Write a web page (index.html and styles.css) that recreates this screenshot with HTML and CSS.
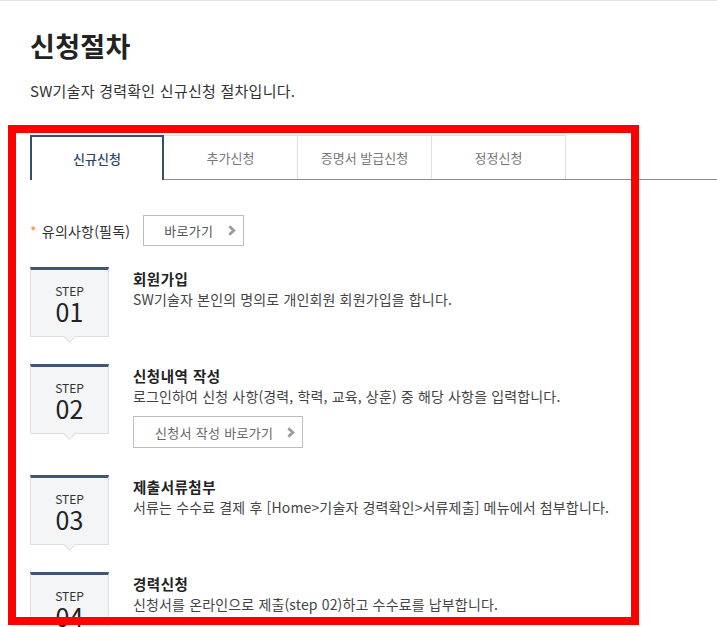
FILE: index.html
```html
<!DOCTYPE html>
<html lang="ko">
<head>
<meta charset="utf-8">
<title>신청절차</title>
<link rel="stylesheet" href="styles.css">
</head>
<body>
<div class="topline"></div>
<main class="page">
  <h1 class="title">신청절차</h1>
  <p class="sub">SW기술자 경력확인 신규신청 절차입니다.</p>

  <div class="tabs">
    <a class="tab active">신규신청</a>
    <a class="tab">추가신청</a>
    <a class="tab">증명서 발급신청</a>
    <a class="tab">정정신청</a>
  </div>

  <div class="notice">
    <span class="notice-label"><span class="star">*</span> 유의사항(필독)</span>
    <a class="btn btn-short">바로가기
      <svg class="chev" width="8" height="11" viewBox="0 0 8 11"><polyline points="1.3,1.3 5.8,5.5 1.3,9.7" fill="none" stroke="#9c9c9c" stroke-width="2.8"/></svg>
    </a>
  </div>

  <ol class="steps">
    <li class="step">
      <div class="step-box"><span class="step-label">STEP</span><span class="step-num">01</span></div>
      <div class="step-body">
        <h3 class="step-title">회원가입</h3>
        <p class="step-desc">SW기술자 본인의 명의로 개인회원 회원가입을 합니다.</p>
      </div>
    </li>
    <li class="step">
      <div class="step-box"><span class="step-label">STEP</span><span class="step-num">02</span></div>
      <div class="step-body">
        <h3 class="step-title">신청내역 작성</h3>
        <p class="step-desc">로그인하여 신청 사항(경력, 학력, 교육, 상훈) 중 해당 사항을 입력합니다.</p>
        <a class="btn btn-long">신청서 작성 바로가기
          <svg class="chev" width="8" height="11" viewBox="0 0 8 11"><polyline points="1.3,1.3 5.8,5.5 1.3,9.7" fill="none" stroke="#9c9c9c" stroke-width="2.8"/></svg>
        </a>
      </div>
    </li>
    <li class="step">
      <div class="step-box"><span class="step-label">STEP</span><span class="step-num">03</span></div>
      <div class="step-body">
        <h3 class="step-title">제출서류첨부</h3>
        <p class="step-desc">서류는 수수료 결제 후 [Home&gt;기술자 경력확인&gt;서류제출] 메뉴에서 첨부합니다.</p>
      </div>
    </li>
    <li class="step">
      <div class="step-box"><span class="step-label">STEP</span><span class="step-num">04</span></div>
      <div class="step-body">
        <h3 class="step-title">경력신청</h3>
        <p class="step-desc">신청서를 온라인으로 제출(step 02)하고 수수료를 납부합니다.</p>
      </div>
    </li>
  </ol>
</main>
<div class="highlight"></div>
</body>
</html>
```

FILE: styles.css
```css
html, body {
  margin: 0;
  padding: 0;
  overflow: hidden;
  background: #fff;
}
body {
  font-family: "Noto Sans CJK KR", "Noto Sans", sans-serif;
  color: #333;
  position: relative;
  height: 627px;
}
.topline {
  height: 1px;
  background: #e3e3e3;
}
.page {
  padding: 25px 0 0 30px;
}
.title {
  margin: 0;
  font-size: 27px;
  line-height: 40px;
  font-weight: 700;
  color: #222;
  letter-spacing: 0.3px;
}
.sub {
  margin: 15px 0 0;
  font-size: 15px;
  line-height: 20px;
  color: #333;
  letter-spacing: 0.25px;
}
.tabs {
  margin-top: 34px;
  display: flex;
  border-bottom: 1px solid #8c8c8c;
  height: 44px;
}
.tab {
  box-sizing: border-box;
  width: 134px;
  height: 44px;
  display: flex;
  align-items: center;
  justify-content: center;
  border-top: 1px solid #e0e0e0;
  border-right: 1px solid #e0e0e0;
  font-size: 13px;
  color: #777;
  background: #fff;
}
.tab.active {
  height: 45px;
  border: 2px solid #34506e;
  border-bottom: none;
  color: #2c4766;
  font-weight: 500;
}
.notice {
  margin-top: 35px;
  display: flex;
  align-items: center;
  gap: 13px;
}
.notice-label {
  font-size: 14px;
  color: #333;
  letter-spacing: 0.2px;
}
.star {
  color: #f0912c;
  margin-right: 1px;
}
.btn {
  box-sizing: border-box;
  height: 31px;
  display: inline-flex;
  align-items: center;
  justify-content: space-between;
  border: 1px solid #bdbdbd;
  font-size: 13px;
  color: #555;
  background: #fff;
  letter-spacing: 0.3px;
}
.btn-short {
  width: 101px;
  padding: 0 7px 0 20px;
}
.btn-long {
  width: 170px;
  height: 32px;
  margin-top: 10px;
  padding: 0 7px 0 21px;
  color: #666;
}
.steps {
  list-style: none;
  margin: 21px 0 0;
  padding: 0;
}
.step {
  display: flex;
  gap: 24px;
  margin-bottom: 27px;
}
.step-box {
  position: relative;
  box-sizing: border-box;
  flex: 0 0 79px;
  height: 70px;
  background: #f4f5f7;
  border: 1px solid #dedede;
  border-top: 3px solid #3c5674;
  display: flex;
  flex-direction: column;
  align-items: center;
  padding-top: 14px;
  color: #222;
}
.step-box::after {
  content: "";
  position: absolute;
  left: 50%;
  bottom: -5px;
  width: 8px;
  height: 8px;
  margin-left: -5px;
  background: #f4f5f7;
  border-right: 1px solid #dedede;
  border-bottom: 1px solid #dedede;
  transform: rotate(45deg);
}
.step-label {
  font-size: 12px;
  line-height: 14px;
  color: #333;
}
.step-num {
  font-size: 25px;
  line-height: 26px;
  color: #222;
}
.step-body {
  padding-top: 2px;
}
.step-title {
  margin: 0;
  font-size: 14.5px;
  line-height: 20px;
  font-weight: 700;
  color: #222;
  letter-spacing: 0.5px;
}
.step-desc {
  margin: 0;
  font-size: 14px;
  line-height: 20px;
  color: #444;
  letter-spacing: 0.15px;
}
.highlight {
  position: absolute;
  left: 8px;
  top: 125px;
  width: 631px;
  height: 500px;
  box-sizing: border-box;
  border: 8px solid #ff0000;
  pointer-events: none;
}
```
